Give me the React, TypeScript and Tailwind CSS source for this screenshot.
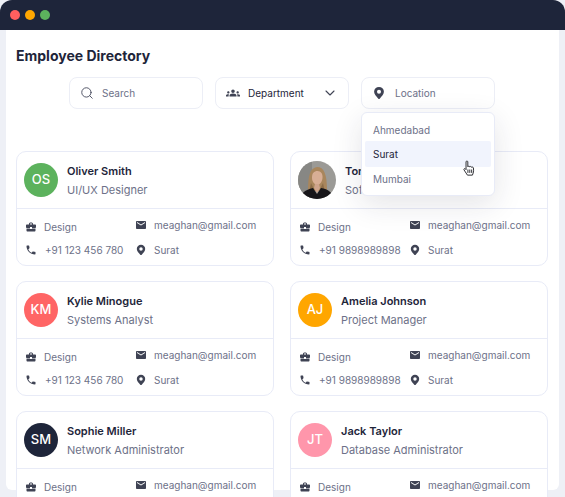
import { Search, ChevronDown } from 'lucide-react';
import { MdBusinessCenter, MdLocalPhone, MdMail, MdGroups } from 'react-icons/md';

const employees = [
  { initials: 'OS', name: 'Oliver Smith', role: 'UI/UX Designer', color: 'bg-[#5cb25d]', phone: '+91 123 456 780' },
  { photo: true, name: 'Tom Hardy', role: 'Software Engineer', color: '', phone: '+91 9898989898' },
  { initials: 'KM', name: 'Kylie Minogue', role: 'Systems Analyst', color: 'bg-[#ff6565]', phone: '+91 123 456 780' },
  { initials: 'AJ', name: 'Amelia Johnson', role: 'Project Manager', color: 'bg-[#ffa600]', phone: '+91 9898989898' },
  { initials: 'SM', name: 'Sophie Miller', role: 'Network Administrator', color: 'bg-[#1e253a]', phone: '+91 123 456 780' },
  { initials: 'JT', name: 'Jack Taylor', role: 'Database Administrator', color: 'bg-[#ff96ab]', phone: '+91 9898989898' },
];

function Pin({ className }: { className?: string }) {
  return (
    <svg viewBox="0 0 16 16" className={className}>
      <path
        fillRule="evenodd"
        fill="currentColor"
        d="M8 1a5.6 5.6 0 0 1 5.6 5.6c0 2.9-2.5 4.9-4.6 7.6a1.3 1.3 0 0 1-2 0C4.900 11.500 2.400 9.500 2.400 6.600A5.600 5.600 0 0 1 8 1Zm0 3.300a2.300 2.300 0 1 0 0 4.600 2.300 2.300 0 0 0 0-4.600Z"
      />
    </svg>
  );
}

function Photo() {
  return (
    <svg viewBox="0 0 38 38" className="w-[38px] h-[38px] rounded-full">
      <rect width="38" height="38" fill="#9b9a96" />
      <rect width="14" height="38" fill="#878784" />
      <path d="M10 30C10 14 12 7 19 6c7 0 10 7 10 24z" fill="#a9865c" />
      <path d="M14 17c0-5 2-7 5.500-7 3.500 0 5.500 3 5 7-.4 4-3 7-5 7-2.500 0-5.500-3-5.500-7z" fill="#d8ae95" />
      <path d="M13 22c-1 4-1 6-2 8l5-2c-1-2-2-4-3-6zM25 22c1 4 1 6 2 8l-5-2c1-2 2-4 3-6z" fill="#8d6c48" />
      <path d="M17 23h4l1 4-3 5-3-5z" fill="#cfa48c" />
      <path d="M2 38c1-6 5-9 13-11l4 6 4-6c7 1 12 5 14 11z" fill="#17161a" />
    </svg>
  );
}

function Hand() {
  return (
    <svg viewBox="0 0 16 20" className="w-[15px] h-[19px]">
      <path
        d="M4.300 1.800c0-1.100 1.900-1.100 1.900 0v5.300c.3-.9 2-.8 2.100.2.400-.8 1.900-.6 2 .4.500-.6 1.800-.3 1.900.7.200 2 .3 4-.3 5.400l-.8 2.200H5.800L2.200 10.500c-.7-1 .6-2 1.400-1.200l.7.800z"
        fill="#fff"
        stroke="#23242a"
        strokeWidth="1"
        strokeLinejoin="round"
      />
      <path d="M6.300 10v3.600M8.300 10v3.600M10.300 10v3.600" stroke="#23242a" strokeWidth="1" fill="none" />
    </svg>
  );
}

function Card({ e }: { e: (typeof employees)[number] }) {
  return (
    <div className="h-[115px] rounded-[10px] border border-[#e8ebf7] bg-white">
      <div className="h-[57px] flex items-center gap-[9px] pl-[7px] border-b border-[#e8ebf7]">
        {e.photo ? (
          <Photo />
        ) : (
          <div className={`w-[34px] h-[34px] rounded-full flex items-center justify-center text-white text-[13px] font-medium ${e.color}`}>
            {e.initials}
          </div>
        )}
        <div>
          <div className="text-[11px] leading-[14px] font-semibold text-[#1e253a]">{e.name}</div>
          <div className="mt-[5px] text-[11px] leading-[14px] text-[#6d7188]">{e.role}</div>
        </div>
      </div>
      <div className="pl-[8px] pt-[10px] grid grid-cols-[110px_1fr] gap-y-[9px] text-[10px] leading-[12px] text-[#6d7188]">
        <div className="flex items-center gap-[7px] h-[14px] mt-[1px]">
          <MdBusinessCenter className="w-[12px] h-[12px] text-[#3f4354]" />
          <span>Design</span>
        </div>
        <div className="flex items-center gap-[7px] h-[14px] -mt-[1px]">
          <MdMail className="w-[12px] h-[12px] text-[#3f4354]" />
          <span>meaghan@gmail.com</span>
        </div>
        <div className="flex items-center gap-[8px] h-[14px]">
          <MdLocalPhone className="w-[12px] h-[12px] text-[#3f4354]" />
          <span>{e.phone}</span>
        </div>
        <div className="flex items-center gap-[7px] h-[14px]">
          <Pin className="w-[12px] h-[12px] text-[#3f4354]" />
          <span>Surat</span>
        </div>
      </div>
    </div>
  );
}

export default function App() {
  return (
    <div className="h-[497px] overflow-hidden bg-[#eef0f6] font-['Inter',sans-serif]">
      <div className="h-[30px] rounded-t-[12px] bg-[#1e253a] flex items-center gap-[5px] pl-[10px]">
        <span className="w-[10px] h-[10px] rounded-full bg-[#ff5f5f]" />
        <span className="w-[10px] h-[10px] rounded-full bg-[#ffa600]" />
        <span className="w-[10px] h-[10px] rounded-full bg-[#5cb25d]" />
      </div>
      <div className="mx-[6px] h-[460px] rounded-b-[6px] bg-white pl-[10px] pr-[11px] pt-[17px]">
        <h1 className="text-[14px] leading-[17px] font-bold text-[#1e253a]">Employee Directory</h1>
        <div className="mt-[13px] flex justify-center gap-[12px]">
          <div className="w-[134px] h-[32px] rounded-[8px] border border-[#eceef6] flex items-center gap-[8px] pl-[10px] text-[10px] text-[#6d7188]">
            <Search className="w-[14px] h-[14px] text-[#4a4e60]" strokeWidth={1.6} />
            <span>Search</span>
          </div>
          <div className="w-[134px] h-[32px] rounded-[8px] border border-[#eceef6] flex items-center gap-[8px] pl-[10px] pr-[10px] text-[10px] text-[#1e253a]">
            <MdGroups className="w-[14px] h-[14px] text-[#3f4354]" />
            <span className="flex-1">Department</span>
            <ChevronDown className="w-[16px] h-[16px] text-[#3f4354]" strokeWidth={1.6} />
          </div>
          <div className="relative w-[134px] h-[32px] rounded-[8px] border border-[#eceef6] flex items-center gap-[9px] pl-[10px] text-[10px] text-[#6d7188]">
            <Pin className="w-[14px] h-[14px] text-[#3f4354]" />
            <span>Location</span>
            <div className="absolute z-10 left-[-1px] top-[34px] w-[134px] h-[84px] rounded-[6px] border border-[#e8ebf7] bg-white p-[3px] shadow-[0_8px_30px_rgba(30,37,58,0.12)]">
              <div className="h-[25px] pl-[8px] pt-[3px] flex items-center text-[#6d7188]">Ahmedabad</div>
              <div className="relative h-[26px] pl-[8px] flex items-center rounded-[2px] bg-[#f1f4fd] text-[#1e253a]">
                Surat
                <div className="absolute left-[97px] top-[19px]">
                  <Hand />
                </div>
              </div>
              <div className="h-[24px] pl-[8px] flex items-center text-[#6d7188]">Mumbai</div>
            </div>
          </div>
        </div>
        <div className="mt-[42px] grid grid-cols-[258px_258px] gap-x-[16px] gap-y-[15px]">
          {employees.map((e) => (
            <Card key={e.name} e={e} />
          ))}
        </div>
      </div>
    </div>
  );
}
